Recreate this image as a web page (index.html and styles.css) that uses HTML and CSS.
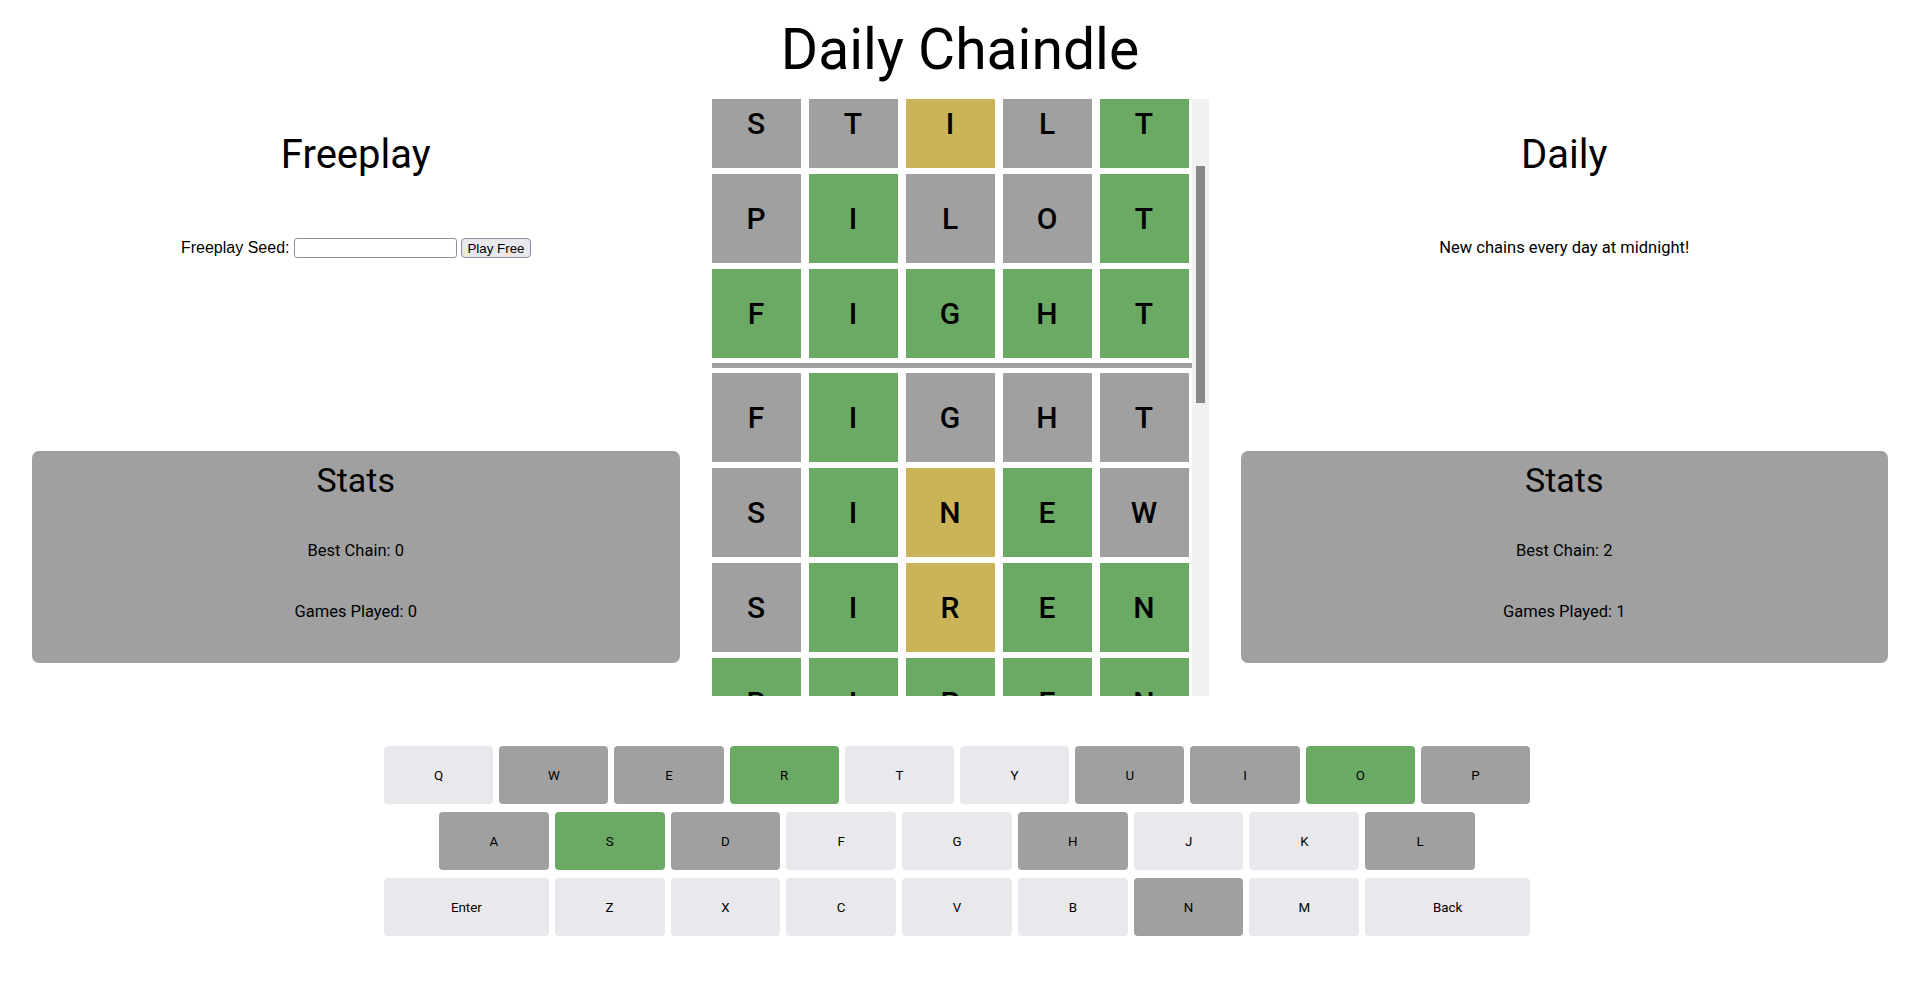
FILE: index.html
```html
<!DOCTYPE html>
<html lang="en">
<head>
<meta charset="UTF-8">
<meta name="viewport" content="width=device-width, initial-scale=1.0">
<title>Daily Chaindle</title>
<link rel="stylesheet" href="styles.css">
</head>
<body>
<header>
    <h1 class="title">Daily Chaindle</h1>
</header>

<main class="layout">
    <section class="side">
        <h2 class="side-title">Freeplay</h2>
        <form class="seed-row">
            <label for="seed">Freeplay Seed:</label>
            <input type="text" id="seed" name="seed" class="seed-input">
            <button type="button" class="play-btn">Play Free</button>
        </form>
        <div class="stats">
            <h2 class="stats-title">Stats</h2>
            <p>Best Chain: 0</p>
            <p>Games Played: 0</p>
        </div>
    </section>

    <section class="board">
        <div class="board-view">
            <div class="board-inner">
                <div class="row">
                    <div class="tile grey">S</div>
                    <div class="tile grey">T</div>
                    <div class="tile yellow">I</div>
                    <div class="tile grey">L</div>
                    <div class="tile green">T</div>
                </div>
                <div class="row">
                    <div class="tile grey">P</div>
                    <div class="tile green">I</div>
                    <div class="tile grey">L</div>
                    <div class="tile grey">O</div>
                    <div class="tile green">T</div>
                </div>
                <div class="row">
                    <div class="tile green">F</div>
                    <div class="tile green">I</div>
                    <div class="tile green">G</div>
                    <div class="tile green">H</div>
                    <div class="tile green">T</div>
                </div>
                <div class="divider"></div>
                <div class="row">
                    <div class="tile grey">F</div>
                    <div class="tile green">I</div>
                    <div class="tile grey">G</div>
                    <div class="tile grey">H</div>
                    <div class="tile grey">T</div>
                </div>
                <div class="row">
                    <div class="tile grey">S</div>
                    <div class="tile green">I</div>
                    <div class="tile yellow">N</div>
                    <div class="tile green">E</div>
                    <div class="tile grey">W</div>
                </div>
                <div class="row">
                    <div class="tile grey">S</div>
                    <div class="tile green">I</div>
                    <div class="tile yellow">R</div>
                    <div class="tile green">E</div>
                    <div class="tile green">N</div>
                </div>
                <div class="row">
                    <div class="tile green">R</div>
                    <div class="tile green">I</div>
                    <div class="tile green">P</div>
                    <div class="tile green">E</div>
                    <div class="tile green">N</div>
                </div>
            </div>
        </div>
        <div class="scrollbar"><div class="scroll-thumb"></div></div>
    </section>

    <section class="side">
        <h2 class="side-title">Daily</h2>
        <p class="note">New chains every day at midnight!</p>
        <div class="stats">
            <h2 class="stats-title">Stats</h2>
            <p>Best Chain: 2</p>
            <p>Games Played: 1</p>
        </div>
    </section>
</main>

<div class="keyboard">
    <div class="kb-row">
        <button class="key">Q</button>
        <button class="key grey">W</button>
        <button class="key grey">E</button>
        <button class="key green">R</button>
        <button class="key">T</button>
        <button class="key">Y</button>
        <button class="key grey">U</button>
        <button class="key grey">I</button>
        <button class="key green">O</button>
        <button class="key grey">P</button>
    </div>
    <div class="kb-row">
        <div class="half"></div>
        <button class="key grey">A</button>
        <button class="key green">S</button>
        <button class="key grey">D</button>
        <button class="key">F</button>
        <button class="key">G</button>
        <button class="key grey">H</button>
        <button class="key">J</button>
        <button class="key">K</button>
        <button class="key grey">L</button>
        <div class="half"></div>
    </div>
    <div class="kb-row">
        <button class="key wide">Enter</button>
        <button class="key">Z</button>
        <button class="key">X</button>
        <button class="key">C</button>
        <button class="key">V</button>
        <button class="key">B</button>
        <button class="key grey">N</button>
        <button class="key">M</button>
        <button class="key wide">Back</button>
    </div>
</div>
</body>
</html>
```

FILE: styles.css
```css
body {
    margin: 0;
    font-family: Roboto, "Liberation Sans", sans-serif;
    color: #000;
    background-color: #fff;
}
.title {
    margin: 0;
    padding-top: 17px;
    font-size: 57px;
    font-weight: 400;
    line-height: 66px;
    text-align: center;
}

/* three columns: freeplay / board / daily */
.layout {
    display: grid;
    grid-template-columns: 1fr 497px 1fr;
    grid-template-rows: 597px;
    column-gap: 32px;
    padding: 0 32px;
    margin-top: 16px;
}
.side {
    display: flex;
    flex-direction: column;
    text-align: center;
}
.side-title {
    margin: 32px 0 0;
    font-size: 40px;
    font-weight: 400;
    line-height: 48px;
}
.seed-row {
    display: flex;
    justify-content: center;
    align-items: center;
    gap: 4.5px;
    height: 20px;
    margin-top: 59px;
    font-family: "Liberation Sans", Arial, sans-serif;
    font-size: 16px;
}
.seed-input {
    box-sizing: border-box;
    width: 163px;
    height: 20px;
    padding: 1px 4px;
    border: 1px solid #8f8f9d;
    border-radius: 3px;
}
.play-btn {
    box-sizing: border-box;
    height: 20px;
    padding: 0 5px;
    font-family: "Liberation Sans", Arial, sans-serif;
    font-size: 13.33px;
    color: #000;
    background-color: #e9e9ed;
    border: 1px solid #8f8f9d;
    border-radius: 4px;
}
.note {
    margin: 59px 0 0;
    font-size: 16.5px;
    line-height: 20px;
}
.stats {
    display: flex;
    flex-direction: column;
    gap: 42px;
    margin-top: auto;
    margin-bottom: 33px;
    padding: 10px 0 42px;
    background-color: #a0a0a0;
    border-radius: 7px;
}
.stats-title {
    margin: 0;
    font-size: 34px;
    font-weight: 400;
    line-height: 38px;
}
.stats p {
    margin: 0;
    font-size: 16.5px;
    line-height: 19px;
}

/* board */
.board {
    display: flex;
    min-height: 0;
    overflow: hidden;
}
.board-view {
    width: 480px;
    overflow: hidden;
}
.board-inner {
    display: flex;
    flex-direction: column;
    gap: 6px;
    margin-top: -20px;
}
.row {
    display: grid;
    grid-template-columns: repeat(5, 89px);
    column-gap: 8px;
}
.tile {
    display: flex;
    align-items: center;
    justify-content: center;
    height: 89px;
    font-size: 30px;
    font-weight: 500;
}
.divider {
    height: 5px;
    margin: -1px 0;
    background-color: #a0a0a0;
}
.scrollbar {
    width: 17px;
    background-color: #f1f1f1;
}
.scroll-thumb {
    width: 9px;
    height: 237px;
    margin: 67px 0 0 4px;
    background-color: #888;
}
.grey { background-color: #a0a0a0; }
.green { background-color: #6aaa64; }
.yellow { background-color: #c9b458; }

/* keyboard */
.keyboard {
    width: 60%;
    margin: 50px auto 0;
}
.kb-row {
    display: flex;
    margin-bottom: 8px;
}
.key {
    flex: 1;
    height: 58px;
    margin: 0 6px 0 0;
    padding: 0;
    font-family: Roboto, "Liberation Sans", sans-serif;
    font-size: 13.33px;
    color: #000;
    background-color: #e9e9ed;
    border: 0;
    border-radius: 4px;
}
.key.grey { background-color: #a0a0a0; }
.key.green { background-color: #6aaa64; }
.key.wide { flex: 1.5; }
.half { flex: 0.5; }
```
